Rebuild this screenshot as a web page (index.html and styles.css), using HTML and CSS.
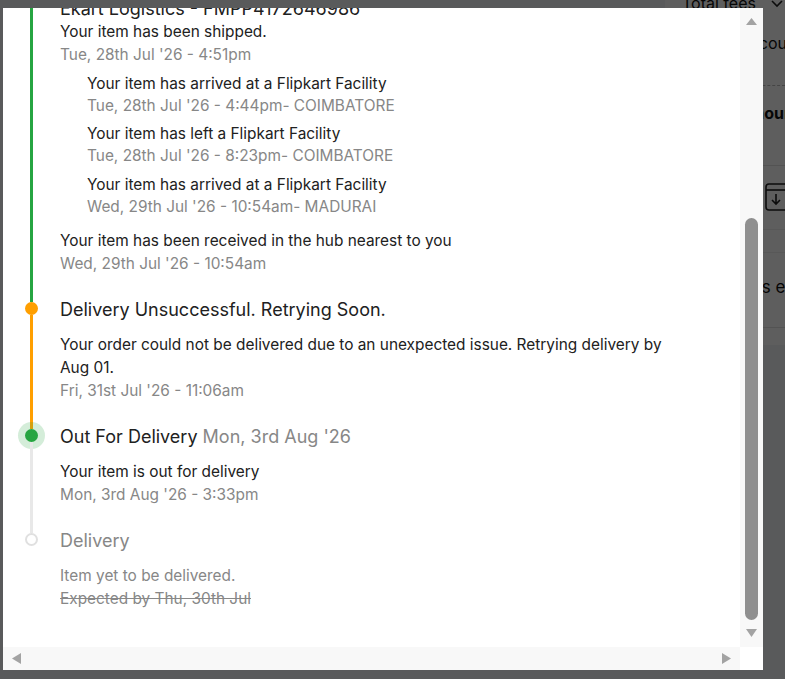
FILE: index.html
```html
<!DOCTYPE html>
<html lang="en">
<head>
<meta charset="utf-8">
<title>Order tracking</title>
<link rel="stylesheet" href="styles.css">
</head>
<body>
<div class="page">
  <div class="page-main"></div>
  <aside class="summary">
    <div class="fees-row"><span>Total fees</span>
      <svg class="chev" width="14" height="14" viewBox="0 0 14 14"><path d="M2 4 L7 9 L12 4" fill="none" stroke="#222" stroke-width="1.6"/></svg>
    </div>
    <div class="disc-row">Discount</div>
    <div class="dash"></div>
    <div class="total-row">Total Amount</div>
    <div class="rule"></div>
    <div class="invoice-row">
      <svg width="28" height="28" viewBox="0 0 28 28"><rect x="1" y="1" width="26" height="26" rx="3" fill="none" stroke="#222" stroke-width="1.6"/><path d="M1 7 H27" stroke="#222" stroke-width="1.6"/><path d="M11 11 V21 M7 17 L11 21 L15 17" fill="none" stroke="#222" stroke-width="1.6"/></svg>
    </div>
    <div class="rule thin"></div>
    <div class="rule thin gap"></div>
    <div class="offer-row">Offers earned</div>
    <div class="rule"></div>
  </aside>
</div>
<div class="overlay"></div>
<div class="modal">
  <div class="modal-view">
    <div class="timeline">
      <div class="step">
        <div class="rail"><span class="seg green grow"></span></div>
        <div class="body">
          <p class="carrier">Ekart Logistics - FMPP4172646986</p>
          <p class="txt">Your item has been shipped.</p>
          <p class="txt muted">Tue, 28th Jul '26 - 4:51pm</p>
          <ul class="subs">
            <li><p>Your item has arrived at a Flipkart Facility</p><p class="muted">Tue, 28th Jul '26 - 4:44pm- COIMBATORE</p></li>
            <li><p>Your item has left a Flipkart Facility</p><p class="muted">Tue, 28th Jul '26 - 8:23pm- COIMBATORE</p></li>
            <li><p>Your item has arrived at a Flipkart Facility</p><p class="muted">Wed, 29th Jul '26 - 10:54am- MADURAI</p></li>
          </ul>
          <p class="txt hub">Your item has been received in the hub nearest to you</p>
          <p class="txt muted">Wed, 29th Jul '26 - 10:54am</p>
        </div>
      </div>
      <div class="step">
        <div class="rail"><span class="seg green top"></span><span class="dot orange"></span><span class="seg orange grow"></span></div>
        <div class="body">
          <h3 class="head">Delivery Unsuccessful. Retrying Soon.</h3>
          <p class="txt">Your order could not be delivered due to an unexpected issue. Retrying delivery by Aug 01.</p>
          <p class="txt muted">Fri, 31st Jul '26 - 11:06am</p>
        </div>
      </div>
      <div class="step">
        <div class="rail"><span class="seg orange top"></span><span class="dot current"></span><span class="seg grey grow"></span></div>
        <div class="body">
          <h3 class="head">Out For Delivery <span class="muted">Mon, 3rd Aug '26</span></h3>
          <p class="txt">Your item is out for delivery</p>
          <p class="txt muted">Mon, 3rd Aug '26 - 3:33pm</p>
        </div>
      </div>
      <div class="step last">
        <div class="rail"><span class="seg grey top"></span><span class="dot hollow"></span></div>
        <div class="body">
          <h3 class="head muted">Delivery</h3>
          <p class="txt muted">Item yet to be delivered.</p>
          <p class="txt muted strike">Expected by Thu, 30th Jul</p>
        </div>
      </div>
    </div>
  </div>
  <div class="vscroll">
    <svg class="arrow up" width="11" height="7" viewBox="0 0 11 7"><polygon points="5.5,0 11,7 0,7" fill="#a3a3a3"/></svg>
    <div class="thumb"></div>
    <svg class="arrow down" width="11" height="8" viewBox="0 0 11 8"><polygon points="0,0 11,0 5.5,8" fill="#a3a3a3"/></svg>
  </div>
  <div class="hscroll">
    <svg class="arrow left" width="9" height="11" viewBox="0 0 9 11"><polygon points="9,0 9,11 0,5.5" fill="#a3a3a3"/></svg>
    <svg class="arrow right" width="9" height="11" viewBox="0 0 9 11"><polygon points="0,0 9,5.5 0,11" fill="#a3a3a3"/></svg>
  </div>
  <div class="corner"></div>
</div>
</body>
</html>
```
FILE: styles.css
```css
* { box-sizing: border-box; }
html, body { margin: 0; padding: 0; }
body {
  width: 785px;
  height: 679px;
  overflow: hidden;
  font-family: Inter, "Noto Sans", "Liberation Sans", sans-serif;
  color: #212121;
}

/* background page */
.page { display: flex; height: 679px; background: #f1f3f6; }
.page-main { flex: 1; }
.summary {
  width: 120px;
  height: 345px;
  background: #fff;
  font-size: 16px;
  line-height: 20px;
  color: #111;
  overflow: hidden;
}
.fees-row { margin-top: -7px; padding-left: 17px; display: flex; align-items: center; gap: 14px; white-space: nowrap; }
.chev { flex: none; margin-top: 2px; }
.disc-row { margin-top: 20px; padding-left: 70px; white-space: nowrap; }
.dash { margin-top: 32px; margin-left: 34px; border-top: 1px dashed #bbb; }
.total-row { margin-top: 17px; padding-left: 30px; font-weight: 700; white-space: nowrap; }
.rule { margin-top: 42px; border-top: 1px solid #e0e0e0; }
.invoice-row { margin-top: 17px; padding-left: 100px; height: 28px; }
.rule.thin { margin-top: 18px; border-top-color: #eee; }
.rule.thin.gap { margin-top: 22px; }
.offer-row { margin-top: 24px; padding-left: 56px; white-space: nowrap; font-size: 17px; }
.offer-row + .rule { margin-top: 30px; }

.overlay { position: fixed; inset: 0; background: rgba(0, 0, 0, 0.63); }

/* modal */
.modal {
  position: absolute;
  left: 3px;
  top: 8px;
  width: 760px;
  height: 662px;
  background: #fff;
  display: grid;
  grid-template-columns: 1fr 23px;
  grid-template-rows: 1fr 23px;
}
.modal-view { overflow: hidden; }
.timeline { margin-top: -11px; }

.step { display: grid; grid-template-columns: 57px 1fr; }
.rail { display: flex; flex-direction: column; align-items: center; }
.seg { width: 3px; flex: none; }
.seg.top { height: 3.5px; }
.seg.grow { flex: 1; }
.seg.green { background: #26a541; }
.seg.orange { background: #ff9f00; }
.seg.grey { background: #e8e8e8; }
.dot { width: 13px; height: 13px; border-radius: 50%; flex: none; }
.dot.orange { background: #ff9f00; }
.dot.current { background: #26a541; box-shadow: 0 0 0 7px rgba(38, 165, 65, 0.2); }
.dot.hollow { background: #fff; border: 2px solid #e0e0e0; }

.body { padding: 0 62px 24px 0; }
.step.last .body { padding-bottom: 40px; }
.carrier { margin: 0; font-size: 18px; line-height: 23px; }
.txt { margin: 0; font-size: 15.4px; line-height: 23px; }
.head { margin: 0 0 12px; font-size: 18px; line-height: 22px; font-weight: 400; }
.muted { color: #878787; }
.strike { text-decoration: line-through; }
.subs { list-style: none; margin: 6.5px 0 0; padding: 0 0 0 27px; }
.subs li { margin-bottom: 6.5px; }
.subs li:last-child { margin-bottom: 0; }
.subs p { margin: 0; font-size: 15.4px; line-height: 22px; }
.hub { margin-top: 11px; }

/* scrollbars */
.vscroll { background: #f8f8f8; display: flex; flex-direction: column; align-items: center; }
.arrow { display: block; flex: none; }
.arrow.up { margin-top: 10px; }
.thumb { margin-top: 193px; width: 13px; height: 402px; border-radius: 7px; background: #8f8f8f; }
.arrow.down { margin-top: 9px; }
.hscroll { background: #f8f8f8; display: flex; align-items: flex-start; justify-content: space-between; padding: 6px 9px 0 9px; }
.corner { background: #fff; }
```
